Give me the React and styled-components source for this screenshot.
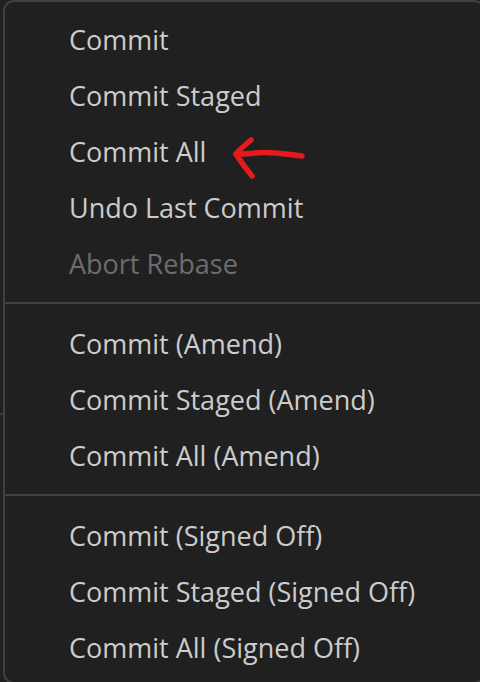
import React from "react";
import styled, { createGlobalStyle } from "styled-components";

const Global = createGlobalStyle`
  html, body {
    margin: 0;
    padding: 0;
    background: #202020;
    width: 480px;
    height: 682px;
    overflow: hidden;
  }
  #root { width: 480px; height: 682px; position: relative; }
`;

const Stage = styled.div`
  position: relative;
  width: 480px;
  height: 682px;
  overflow: hidden;
  background: #202020;
`;

const Behind = styled.div`
  position: absolute;
  left: 0;
  top: ${(p) => p.$top}px;
  width: 4px;
  height: 2px;
  background: #3a3a3a;
`;

const Menu = styled.div`
  position: relative;
  margin-left: 3px;
  width: 482px;
  height: 684px;
  box-sizing: border-box;
  border: 2px solid #404040;
  border-radius: 11px;
  background: #202020;
  padding-top: 9px;
  font-family: "Open Sans", "Noto Sans", sans-serif;
`;

const Item = styled.div`
  height: 56px;
  display: flex;
  align-items: center;
  padding-left: 64px;
  font-size: 27px;
  color: ${(p) => (p.$disabled ? "#6d6d6d" : "#cccccc")};
  white-space: nowrap;
`;

const Separator = styled.div`
  height: 24px;
  display: flex;
  align-items: center;
  &::before {
    content: "";
    display: block;
    width: 100%;
    height: 2px;
    background: #404040;
  }
`;

const Arrow = styled.svg`
  position: absolute;
  left: 225px;
  top: 130px;
  pointer-events: none;
`;

const groups = [
  [
    { label: "Commit" },
    { label: "Commit Staged" },
    { label: "Commit All" },
    { label: "Undo Last Commit" },
    { label: "Abort Rebase", disabled: true },
  ],
  [
    { label: "Commit (Amend)" },
    { label: "Commit Staged (Amend)" },
    { label: "Commit All (Amend)" },
  ],
  [
    { label: "Commit (Signed Off)" },
    { label: "Commit Staged (Signed Off)" },
    { label: "Commit All (Signed Off)" },
  ],
];

export default function App() {
  return (
    <Stage>
      <Global />
      <Behind $top={413} />
      <Menu>
        {groups.map((g, gi) => (
          <React.Fragment key={gi}>
            {gi > 0 && <Separator />}
            {g.map((it) => (
              <Item key={it.label} $disabled={it.disabled}>
                {it.label}
              </Item>
            ))}
          </React.Fragment>
        ))}
      </Menu>
      <Arrow width="90" height="60" viewBox="225 130 90 60">
        <g fill="none" stroke="#e51b1b" strokeWidth="5.5" strokeLinecap="round" strokeLinejoin="round">
          <path d="M302 156 C 285 154, 270 151, 255 153 C 248 154, 242 154, 236 154" />
          <path d="M251 140 C 245 145, 240 149, 236 154 C 241 162, 246 169, 252 176" />
        </g>
      </Arrow>
    </Stage>
  );
}
